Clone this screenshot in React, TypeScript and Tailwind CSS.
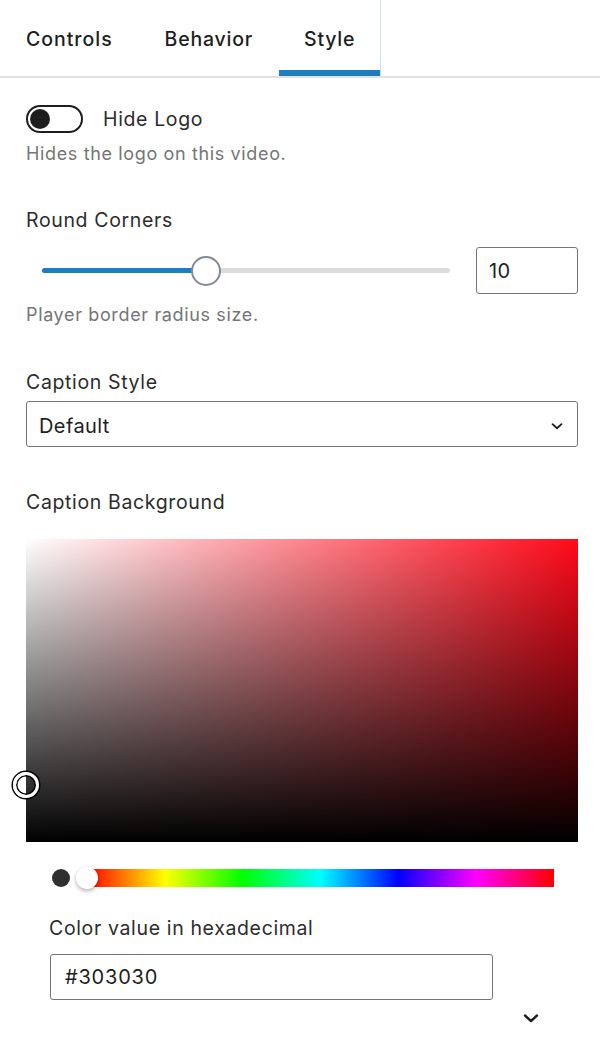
import React from "react";

function Chevron({ className }: { className?: string }) {
  return (
    <svg className={className} viewBox="0 0 24 24" fill="none" stroke="#1e1e1e" strokeWidth="2.4" strokeLinecap="round" strokeLinejoin="round">
      <path d="M6 9.5l6 5.5 6-5.5" />
    </svg>
  );
}

export default function App() {
  return (
    <div className="w-[600px] h-[1050px] bg-white font-['Inter',sans-serif] text-[#1e1e1e] overflow-hidden">
      {/* Tabs */}
      <div className="flex border-b-2 border-[#e2e2e2]">
        <div className="flex border-r border-[#cfe0ec]">
          <button className="h-[76px] pt-[4px] px-[26px] text-[19.5px] tracking-[0.05em] font-medium text-[#1e1e1e]">Controls</button>
          <button className="h-[76px] pt-[4px] px-[26px] text-[19.5px] tracking-[0.04em] font-medium text-[#1e1e1e]">Behavior</button>
          <button className="relative h-[76px] pt-[4px] px-[25px] text-[19.5px] tracking-[0.04em] font-medium text-[#1e1e1e]">
            Style
            <span className="absolute left-0 right-0 bottom-0 h-[6px] bg-[#1c7dbf]" />
          </button>
        </div>
      </div>

      <div className="pl-[26px] pr-[22px] tracking-[0.04em]">
        {/* Hide logo */}
        <div className="mt-[27px] flex items-center h-[28px]">
          <div className="w-[57px] h-[28px] rounded-full border-2 border-[#1e1e1e] flex items-center">
            <div className="ml-[2px] w-[20px] h-[20px] rounded-full bg-[#1e1e1e]" />
          </div>
          <span className="ml-[20px] text-[19.5px] leading-[27px] text-[#2c2c2c]">Hide Logo</span>
        </div>
        <p className="mt-[7px] text-[18px] leading-[27px] text-[#757575]">Hides the logo on this video.</p>

        {/* Round corners */}
        <p className="mt-[40px] text-[19.5px] leading-[27px] text-[#2c2c2c]">Round Corners</p>
        <div className="mt-[13px] flex items-center h-[47px]">
          <div className="relative ml-[16px] w-[408px] h-[30px] flex items-center">
            <div className="w-full h-[5px] rounded-full bg-[#dcdcde] flex">
              <div className="w-[40%] h-full rounded-full bg-[#1c7dbf]" />
            </div>
            <div className="absolute left-[149px] top-0 w-[30px] h-[30px] rounded-full bg-white border-2 border-[#808a97]" />
          </div>
          <div className="ml-[26px] w-[102px] h-[47px] border border-[#757575] rounded-[3px] flex items-center px-[12px] text-[20px] tracking-[0.02em] text-[#1e1e1e]">
            10
          </div>
        </div>
        <p className="mt-[7px] text-[18px] leading-[27px] text-[#757575]">Player border radius size.</p>

        {/* Caption style */}
        <p className="mt-[41px] text-[19.5px] leading-[27px] text-[#2c2c2c]">Caption Style</p>
        <div className="mt-[5px] w-[552px] h-[46px] border border-[#757575] rounded-[3px] flex items-center justify-between pl-[12px] pr-[11px] pt-[3px]">
          <span className="text-[20px] tracking-[0.02em] text-[#1e1e1e]">Default</span>
          <Chevron className="w-[18px] h-[18px]" />
        </div>

        {/* Caption background */}
        <p className="mt-[42px] text-[19.5px] leading-[27px] text-[#2c2c2c]">Caption Background</p>
        <div className="relative mt-[23px] w-[552px] h-[303px] bg-[#ff0a1a]">
          <div className="absolute inset-0 bg-linear-to-r from-white to-transparent" />
          <div className="absolute inset-0 bg-linear-to-b from-transparent to-black" />
          <div className="absolute left-[-13px] top-[233px] w-[26px] h-[26px] rounded-full border-[3px] border-white shadow-[0_0_0_1.5px_#000,inset_0_0_0_1.5px_#000]" />
        </div>

        {/* Hue row */}
        <div className="mt-[27px] flex items-center h-[18px]">
          <div className="ml-[26px] w-[18px] h-[18px] rounded-full bg-[#303030]" />
          <div className="relative ml-[17px] w-[467px] h-[18px] bg-[linear-gradient(to_right,#f00,#ff0,#0f0,#0ff,#00f,#f0f,#f00)]">
            <div className="absolute left-[-11px] top-[-2px] w-[22px] h-[22px] rounded-full bg-white shadow-[0_2px_4px_rgba(0,0,0,0.3)]" />
          </div>
        </div>

        {/* Hex */}
        <div className="pl-[23px]">
          <p className="mt-[28px] text-[19.5px] leading-[27px] text-[#2c2c2c]">Color value in hexadecimal</p>
          <div className="mt-[12px] ml-[1px] w-[443px] h-[46px] border border-[#757575] rounded-[3px] flex items-center px-[14px] text-[20px] tracking-[0.04em] text-[#1e1e1e]">
            #303030
          </div>
          <div className="flex justify-end w-[494px] mt-[6px]">
            <Chevron className="w-[24px] h-[24px]" />
          </div>
        </div>
      </div>
    </div>
  );
}
